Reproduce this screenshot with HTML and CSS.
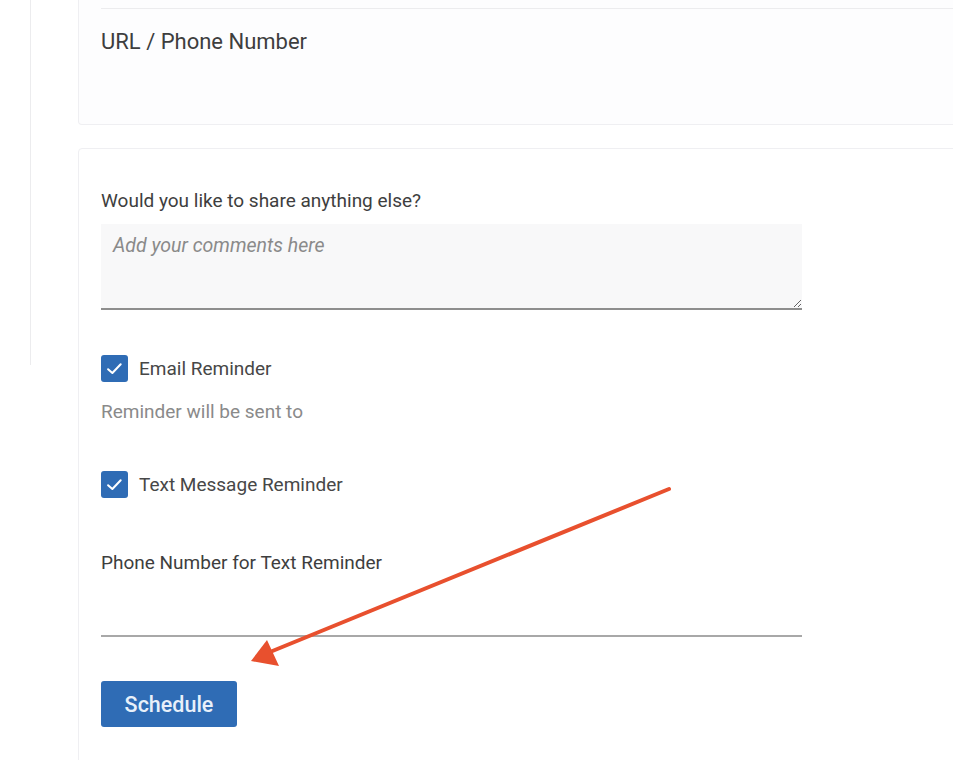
FILE: index.html
```html
<!DOCTYPE html>
<html lang="en">
<head>
    <meta charset="UTF-8">
    <meta name="viewport" content="width=device-width, initial-scale=1.0">
    <title>Schedule Reminder</title>
    <link rel="stylesheet" href="styles.css">
</head>
<body>
    <div class="page">
        <div class="rail"></div>

        <main class="content">
            <!-- Contact card (top cut off) -->
            <section class="card card-top">
                <div class="prev-line"></div>
                <label class="field-label big" for="url">URL / Phone Number</label>
                <input class="ghost-input" id="url" type="text">
            </section>

            <!-- Details card -->
            <section class="card card-main">
                <label class="field-label" for="comments">Would you like to share anything else?</label>
                <textarea id="comments" class="comments" placeholder="Add your comments here"></textarea>

                <label class="check-row">
                    <span class="checkbox">
                        <svg viewBox="0 0 16 16" width="19" height="19"><path d="M2.6 8.6 L6.2 11.8 L13.2 4.4" fill="none" stroke="#fff" stroke-width="1.7" stroke-linecap="round" stroke-linejoin="round"/></svg>
                    </span>
                    Email Reminder
                </label>
                <p class="hint">Reminder will be sent to</p>

                <label class="check-row second">
                    <span class="checkbox">
                        <svg viewBox="0 0 16 16" width="19" height="19"><path d="M2.6 8.6 L6.2 11.8 L13.2 4.4" fill="none" stroke="#fff" stroke-width="1.7" stroke-linecap="round" stroke-linejoin="round"/></svg>
                    </span>
                    Text Message Reminder
                </label>

                <label class="field-label phone-label" for="phone">Phone Number for Text Reminder</label>
                <input class="phone-input" id="phone" type="text">

                <button class="schedule-btn">Schedule</button>
            </section>
        </main>
    </div>

    <!-- annotation arrow drawn over the form -->
    <svg class="arrow" width="953" height="760" viewBox="0 0 953 760">
        <line x1="669" y1="489" x2="270" y2="652" stroke="#e8502e" stroke-width="4" stroke-linecap="round"/>
        <polygon points="251,661 267,640 279,666" fill="#e8502e"/>
    </svg>
</body>
</html>
```

FILE: styles.css
```css
body, html {
    margin: 0;
    padding: 0;
    font-family: Roboto, 'Liberation Sans', sans-serif;
    color: #444;
    background: #fff;
    overflow: hidden;
}

.page {
    display: flex;
    align-items: flex-start;
    height: 760px;
}

.rail {
    width: 30px;
    height: 365px;
    border-right: 1px solid #ececee;
    flex-shrink: 0;
}

.content {
    margin-left: 47px;
    width: 900px;
    flex-shrink: 0;
}

.card {
    border: 1px solid #efeff2;
    border-radius: 4px;
    background: #fdfdfe;
    padding: 0 22px;
}

.card-top {
    border-top: none;
    border-radius: 0 0 4px 4px;
    height: 125px;
    box-sizing: border-box;
    padding-top: 8px;
}

.prev-line {
    height: 1px;
    background: #ececee;
    margin-bottom: 20px;
}

.field-label {
    display: block;
    font-size: 19px;
    color: #3e3e3e;
    line-height: 22px;
}

.field-label.big {
    font-size: 22px;
    line-height: 26px;
}

.ghost-input {
    display: block;
    width: 400px;
    height: 28px;
    border: none;
    background: transparent;
    outline: none;
}

.card-main {
    margin-top: 23px;
    padding-top: 41px;
    height: 640px;
    box-sizing: border-box;
    background: #fff;
}

.comments {
    display: block;
    width: 701px;
    height: 86px;
    box-sizing: border-box;
    margin-top: 12px;
    padding: 10px 12px;
    border: none;
    border-bottom: 2px solid #8e8e8e;
    background: #f8f8f9;
    font-family: Roboto, 'Liberation Sans', sans-serif;
    font-size: 19.5px;
    resize: vertical;
    outline: none;
}

.comments::placeholder {
    color: #8a8a8a;
    font-style: italic;
}

.check-row {
    display: flex;
    align-items: center;
    gap: 11px;
    margin-top: 45px;
    font-size: 19px;
    color: #474747;
    line-height: 26px;
}

.check-row.second {
    margin-top: 48px;
}

.checkbox {
    width: 27px;
    height: 27px;
    border-radius: 3px;
    background: #2f6cb5;
    display: flex;
    align-items: center;
    justify-content: center;
}

.hint {
    margin: 19px 0 0;
    font-size: 19px;
    color: #8a8a8a;
    line-height: 22px;
}

.phone-label {
    margin-top: 54px;
}

.phone-input {
    display: block;
    width: 701px;
    height: 63px;
    box-sizing: border-box;
    border: none;
    border-bottom: 2px solid #a8a8a8;
    background: transparent;
    outline: none;
}

.schedule-btn {
    display: block;
    margin-top: 44px;
    width: 136px;
    height: 46px;
    border: none;
    border-radius: 3px;
    background: #2f6cb5;
    color: #e8f0fa;
    font-family: Roboto, 'Liberation Sans', sans-serif;
    font-size: 21.5px;
    font-weight: 500;
    cursor: pointer;
}

.arrow {
    position: absolute;
    left: 0;
    top: 0;
    pointer-events: none;
}
```
